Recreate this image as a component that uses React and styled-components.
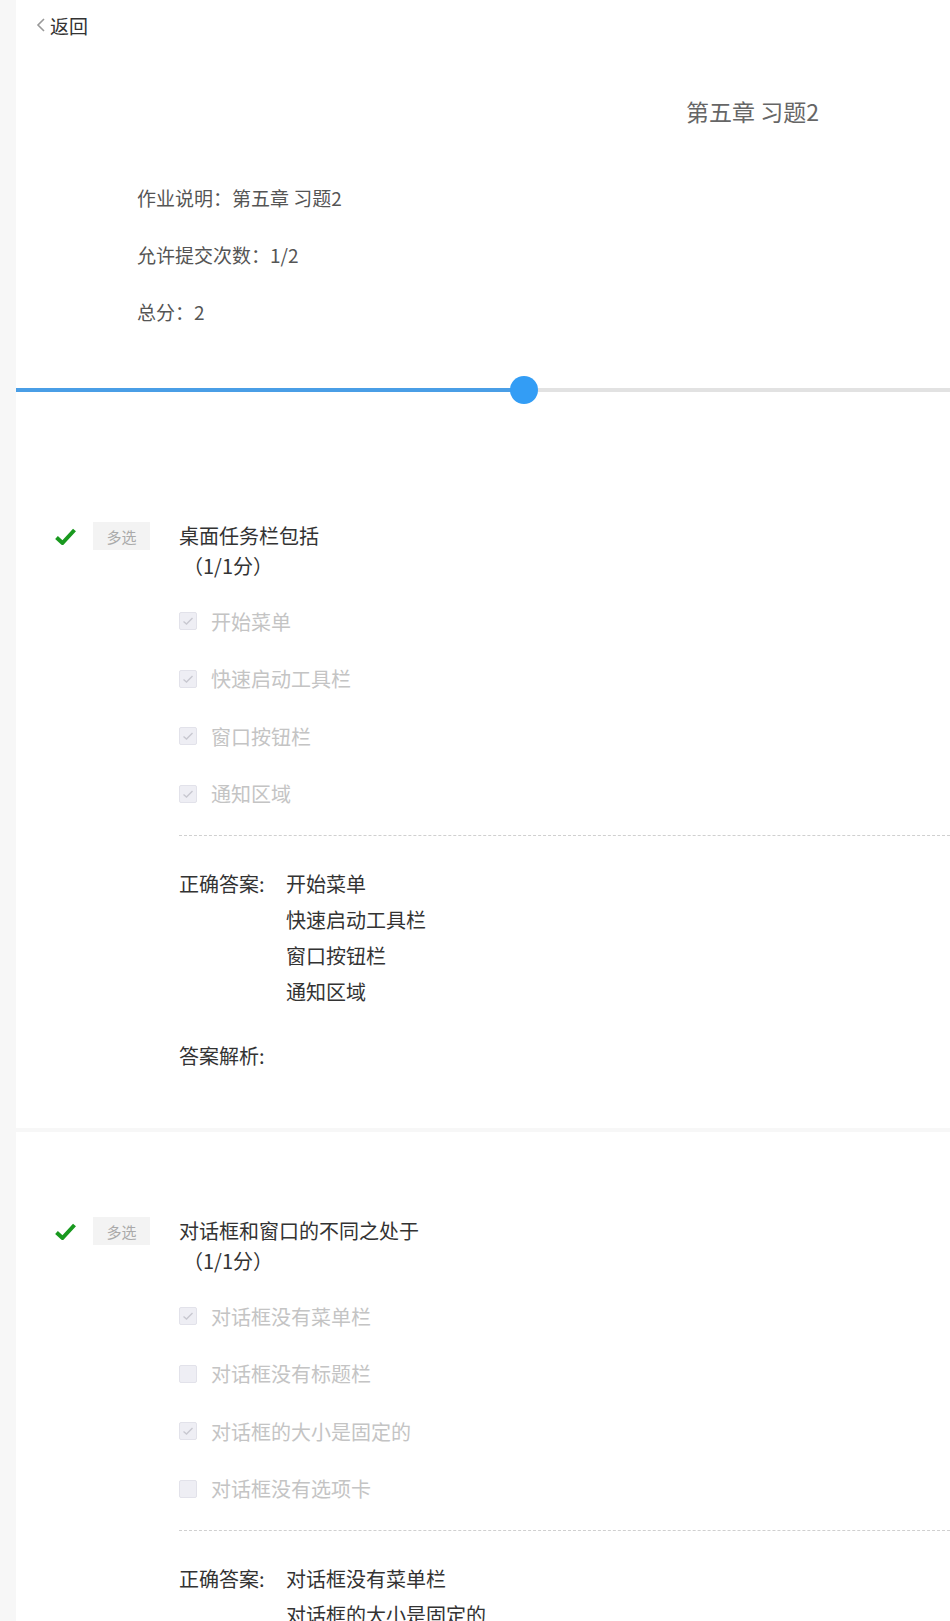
import React from "react";
import styled, { createGlobalStyle } from "styled-components";

const GlobalStyle = createGlobalStyle`
  html, body {
    margin: 0;
    padding: 0;
    background: #f7f7f7;
    font-family: "Noto Sans CJK SC", "Noto Sans", sans-serif;
  }
`;

const Page = styled.div`
  padding-left: 16px;
  background: #f7f7f7;
  min-height: 1621px;
`;

const Panel = styled.div`
  background: #fff;
  padding-bottom: ${(p) => p.bottom || 0}px;
  margin-bottom: 4px;
`;

const BackRow = styled.div`
  height: 50px;
  display: flex;
  align-items: center;
  padding-left: 20px;
  gap: 4px;
  font-size: 19px;
  color: #333;
  cursor: pointer;
`;

const Title = styled.h1`
  margin: 46px 0 0;
  padding-left: 670px;
  font-size: 23px;
  line-height: 30px;
  font-weight: 400;
  color: #666;
  white-space: nowrap;
`;

const InfoList = styled.div`
  margin-top: 60px;
  padding-left: 121px;
  display: flex;
  flex-direction: column;
  gap: 33px;
`;

const InfoLine = styled.div`
  font-size: 19px;
  line-height: 24px;
  color: #555;
`;

const SliderWrap = styled.div`
  margin-top: 51px;
  height: 30px;
  position: relative;
  display: flex;
  align-items: center;
`;

const Track = styled.div`
  width: 100%;
  height: 4px;
  background: #e2e2e2;
  display: flex;
  align-items: center;
`;

const Fill = styled.div`
  height: 4px;
  background: #4a9ee6;
  position: relative;
`;

const Thumb = styled.span`
  position: absolute;
  right: -14px;
  top: -12px;
  width: 28px;
  height: 28px;
  border-radius: 50%;
  background: #339df5;
`;

const Question = styled.div`
  padding-top: ${(p) => p.top}px;
`;

const QHead = styled.div`
  display: flex;
  align-items: flex-start;
`;

const Mark = styled.div`
  width: 22px;
  height: 30px;
  margin-left: 39px;
  display: flex;
  align-items: center;
`;

const Tag = styled.span`
  margin-left: 16px;
  width: 57px;
  height: 28px;
  margin-top: 1px;
  background: #f3f3f3;
  color: #aaa;
  font-size: 15px;
  display: flex;
  align-items: center;
  justify-content: center;
`;

const QText = styled.div`
  margin-left: 29px;
  font-size: 20px;
  line-height: 30px;
  color: #333;
`;

const Score = styled.div`
  padding-left: 4px;
`;

const Body = styled.div`
  margin-left: 163px;
`;

const Options = styled.div`
  margin-top: 20px;
  display: flex;
  flex-direction: column;
  gap: 17.5px;
`;

const Option = styled.label`
  height: 40px;
  display: flex;
  align-items: center;
  gap: 14px;
  font-size: 20px;
  color: #c4c4c4;
`;

const Box = styled.span`
  width: 18px;
  height: 18px;
  box-sizing: border-box;
  border: 1px solid #e2e2ea;
  border-radius: 2px;
  background: #eeeef4;
  display: flex;
  align-items: center;
  justify-content: center;
`;

const Divider = styled.div`
  margin-top: 21.5px;
  border-top: 1px dashed #d0d0d0;
`;

const AnswerRow = styled.div`
  margin-top: ${(p) => p.top}px;
  display: flex;
  font-size: 20px;
  line-height: 36px;
  color: #333;
`;

const Label = styled.div`
  width: 107px;
  flex-shrink: 0;
`;

const AnswerList = styled.div`
  display: flex;
  flex-direction: column;
`;

const CheckMark = () => (
  <svg width="21" height="17" viewBox="0 0 21 17">
    <path d="M1.5 9.5 L7.5 15 L19.5 2" fill="none" stroke="#19991f" strokeWidth="4" strokeLinejoin="round" />
  </svg>
);

const Tick = () => (
  <svg width="12" height="10" viewBox="0 0 12 10">
    <path d="M1.5 5.5 L4.5 8 L10.5 2" fill="none" stroke="#c8c8d0" strokeWidth="1.4" />
  </svg>
);

const questions = [
  {
    title: "桌面任务栏包括",
    score: "（1/1分）",
    options: [
      ["开始菜单", true],
      ["快速启动工具栏", true],
      ["窗口按钮栏", true],
      ["通知区域", true],
    ],
    answers: ["开始菜单", "快速启动工具栏", "窗口按钮栏", "通知区域"],
  },
  {
    title: "对话框和窗口的不同之处于",
    score: "（1/1分）",
    options: [
      ["对话框没有菜单栏", true],
      ["对话框没有标题栏", false],
      ["对话框的大小是固定的", true],
      ["对话框没有选项卡", false],
    ],
    answers: ["对话框没有菜单栏", "对话框的大小是固定的"],
  },
];

function QuestionBlock({ q, top }) {
  return (
    <Question top={top}>
      <QHead>
        <Mark>
          <CheckMark />
        </Mark>
        <Tag>多选</Tag>
        <QText>
          {q.title}
          <Score>{q.score}</Score>
        </QText>
      </QHead>
      <Body>
        <Options>
          {q.options.map(([text, checked]) => (
            <Option key={text}>
              <Box>{checked && <Tick />}</Box>
              {text}
            </Option>
          ))}
        </Options>
        <Divider />
        <AnswerRow top={30}>
          <Label>正确答案:</Label>
          <AnswerList>
            {q.answers.map((a) => (
              <div key={a}>{a}</div>
            ))}
          </AnswerList>
        </AnswerRow>
        <AnswerRow top={28}>
          <Label>答案解析:</Label>
        </AnswerRow>
      </Body>
    </Question>
  );
}

export default function App() {
  const progress = 508 / 934;
  return (
    <Page>
      <GlobalStyle />
      <Panel bottom={54}>
        <BackRow>
          <svg width="10" height="16" viewBox="0 0 10 16">
            <path d="M8 2 L2 8 L8 14" fill="none" stroke="#999" strokeWidth="1.6" />
          </svg>
          返回
        </BackRow>
        <Title>第五章 习题2</Title>
        <InfoList>
          <InfoLine>作业说明：第五章 习题2</InfoLine>
          <InfoLine>允许提交次数：1/2</InfoLine>
          <InfoLine>总分：2</InfoLine>
        </InfoList>
        <SliderWrap>
          <Track>
            <Fill style={{ width: `${progress * 100}%` }}>
              <Thumb />
            </Fill>
          </Track>
        </SliderWrap>
        <QuestionBlock q={questions[0]} top={116} />
      </Panel>
      <Panel bottom={60}>
        <QuestionBlock q={questions[1]} top={84} />
      </Panel>
    </Page>
  );
}
